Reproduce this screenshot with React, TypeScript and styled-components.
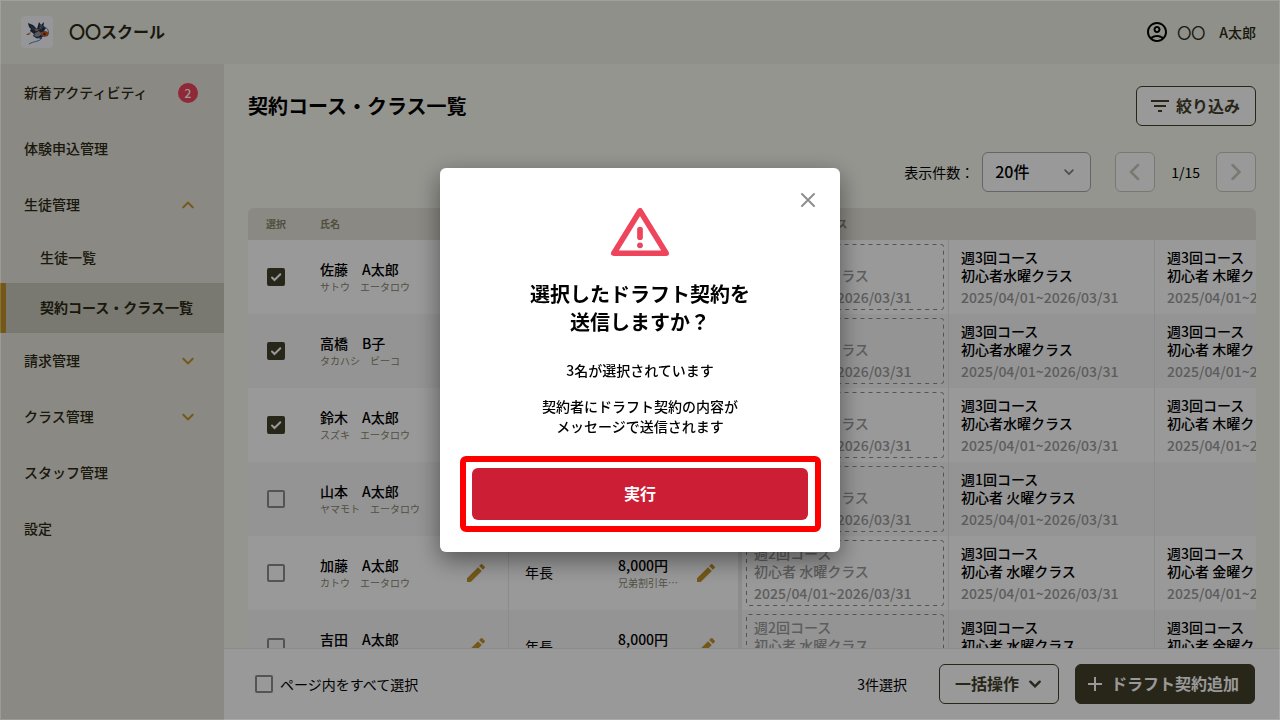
import React, { useState } from "react";
import styled, { createGlobalStyle, css } from "styled-components";
import { MdAdd, MdEdit, MdFilterList, MdOutlineAccountCircle } from "react-icons/md";

const color = {
  ink: "#000000",
  olive: "#433e2b",
  navText: "#2b2914",
  muted: "#88866f",
  gray: "#9b9b9b",
  gold: "#c0932a",
  danger: "#cc1e34",
  alert: "#ee445c",
  header: "#eff0e5",
  sidebar: "#e7e4da",
  page: "#f7f8ef",
  line: "#e9e9e9",
};

const GlobalStyle = createGlobalStyle`
  *, *::before, *::after { box-sizing: border-box; }
  body {
    margin: 0;
    font-family: "Noto Sans CJK JP", "Noto Sans", sans-serif;
    font-size: 14px;
    line-height: 20px;
    font-weight: 500;
    color: ${color.ink};
  }
  button, select, input { font: inherit; color: inherit; margin: 0; }
  button { cursor: pointer; }
  a { color: inherit; text-decoration: none; }
  h1, h2, p { margin: 0; }
  svg { display: block; flex: none; }
`;

const Shell = styled.div`
  display: grid;
  grid-template: 64px minmax(0, 1fr) / 224px minmax(0, 1fr);
  height: 100vh;
  overflow: hidden;
`;

const Header = styled.header`
  grid-column: 1 / -1;
  display: flex;
  align-items: center;
  justify-content: space-between;
  padding: 0 24px 0 21px;
  background: ${color.header};
  color: ${color.navText};
`;

const Brand = styled.div`
  display: flex;
  align-items: center;
  gap: 16px;
  font-size: 16px;
  font-weight: 700;
`;

const Label = styled.span`
  padding-bottom: 2px;
`;

const LogoTile = styled.span`
  width: 32px;
  height: 32px;
  border-radius: 4px;
  background: #fbfbff;
`;

const User = styled.div`
  display: flex;
  align-items: center;
  gap: 8px;
  white-space: pre;

  svg { color: ${color.ink}; }
`;

const Sidebar = styled.nav`
  padding-top: 1px;
  background: ${color.sidebar};
  color: ${color.navText};
`;

const NavLink = styled.a`
  display: flex;
  align-items: center;
  justify-content: space-between;
  height: 56px;
  padding: 0 24px;
`;

const SubLink = styled.a<{ $active?: boolean }>`
  display: flex;
  align-items: center;
  height: 50px;
  padding: 0 0 2px 34px;
  border-left: 6px solid transparent;
  ${(p) =>
    p.$active &&
    css`
      font-weight: 700;
      background: #cacabc;
      border-left-color: ${color.gold};
    `}
`;

const NavMark = styled.span`
  color: ${color.gold};
`;

const Badge = styled.span`
  width: 20px;
  height: 20px;
  margin-right: 2px;
  border-radius: 50%;
  background: ${color.alert};
  color: #fff;
  font-size: 12px;
  text-align: center;
`;

const Main = styled.main`
  display: flex;
  flex-direction: column;
  min-height: 0;
  background: ${color.page};
`;

const Content = styled.div`
  flex: 1;
  min-height: 0;
  overflow: hidden;
  padding: 22px 24px 0;
`;

const TitleRow = styled.div`
  display: flex;
  align-items: center;
  justify-content: space-between;
`;

const PageTitle = styled.h1`
  font-size: 20px;
  line-height: 28px;
  font-weight: 700;
`;

const Button = styled.button<{ $primary?: boolean }>`
  display: inline-flex;
  align-items: center;
  gap: 4px;
  height: 40px;
  padding: 0 15px 0 11px;
  border: 1px solid ${color.olive};
  border-radius: 6px;
  background: ${(p) => (p.$primary ? color.olive : "#fff")};
  color: ${(p) => (p.$primary ? "#fff" : color.olive)};
  font-size: 16px;
  font-weight: 700;
  white-space: nowrap;
`;

const BulkButton = styled(Button)`
  padding: 0 11px 0 15px;
`;

const AddButton = styled(Button)`
  padding: 0 15px 0 7px;
`;

const PagerRow = styled.div`
  display: flex;
  align-items: center;
  justify-content: flex-end;
  gap: 24px;
  margin: 26px 0 16px;
  font-weight: 400;
`;

const PageSize = styled.label`
  display: flex;
  align-items: center;
  gap: 8px;
`;

const SelectBox = styled.span`
  display: grid;
  align-items: center;

  > * { grid-area: 1 / 1; }
  > svg {
    justify-self: end;
    margin-right: 12px;
    color: #7d7d7d;
    pointer-events: none;
  }
`;

const Select = styled.select`
  appearance: none;
  width: 109px;
  height: 40px;
  padding: 0 12px 2px;
  border: 1px solid #a8a8ad;
  border-radius: 6px;
  background: #fff;
  font-size: 16px;
  font-weight: 500;
`;

const Pager = styled.div`
  display: flex;
  align-items: center;
  gap: 16px;
`;

const PagerButton = styled.button`
  display: grid;
  place-items: center;
  width: 40px;
  height: 40px;
  padding: 0;
  border: 1px solid #cacabc;
  border-radius: 6px;
  background: #fff;
  color: #cacabc;
`;

const TableWrap = styled.div`
  overflow: hidden;
  border-radius: 6px 6px 0 0;
`;

const Table = styled.table`
  table-layout: fixed;
  width: 1113px;
  border-collapse: separate;
  border-spacing: 0;
`;

const Th = styled.th<{ $center?: boolean }>`
  height: 32px;
  padding: 0 ${(p) => (p.$center ? "0" : "16px")};
  background: ${color.sidebar};
  color: ${color.muted};
  font-size: 10px;
  line-height: 14px;
  font-weight: 700;
  text-align: ${(p) => (p.$center ? "center" : "left")};
`;

const Row = styled.tr`
  background: #fff;
  &:nth-child(even) { background: #f7f7f7; }
`;

const Td = styled.td<{ $line?: number; $pad?: number }>`
  height: 74px;
  padding: 0 ${(p) => p.$pad ?? 16}px;
  border-right: ${(p) => p.$line ?? 0}px solid ${color.line};
  vertical-align: middle;
`;

const GradeCell = styled(Td)`
  padding-bottom: 2px;
  font-weight: 400;
`;

const EditableCell = styled.div`
  display: flex;
  align-items: center;
  justify-content: space-between;
`;

const SubText = styled.div`
  color: ${color.muted};
  font-size: 10px;
  line-height: 16px;
  font-weight: 400;
`;

const EditButton = styled.button`
  padding: 0;
  border: 0;
  background: none;
  color: ${color.gold};
  margin-right: 4px;
`;

const Course = styled.div<{ $draft?: boolean }>`
  position: relative;
  display: flex;
  flex-direction: column;
  justify-content: center;
  height: 66px;
  line-height: 18px;
  white-space: nowrap;
  padding-left: ${(p) => (p.$draft ? "8px" : "0")};
  color: ${(p) => (p.$draft ? color.gray : color.ink)};
`;

const CourseTerm = styled.span`
  margin-top: 4px;
  color: ${color.gray};
`;

const DashedFrame = styled.svg`
  position: absolute;
  inset: 0;
  width: 100%;
  height: 100%;
`;

const CheckWrap = styled.span`
  display: grid;
  place-items: center;
  width: 18px;
  height: 18px;

  > * { grid-area: 1 / 1; }
  > svg { visibility: hidden; pointer-events: none; }
  > input:checked + svg { visibility: visible; }
`;

const CheckInput = styled.input`
  appearance: none;
  width: 18px;
  height: 18px;
  border: 2px solid #8d8d8d;
  border-radius: 2px;

  &:checked {
    border-color: ${color.olive};
    background: ${color.olive};
  }
`;

const CheckCell = styled.div`
  display: grid;
  place-items: center;
`;

const ActionBar = styled.footer`
  display: flex;
  align-items: center;
  justify-content: space-between;
  height: 72px;
  padding: 0 25px 1px 31px;
  border-top: 1px solid ${color.line};
  background: #fff;
`;

const SelectAll = styled.label`
  display: flex;
  align-items: center;
  gap: 7px;
  font-weight: 400;
`;

const Actions = styled.div`
  display: flex;
  align-items: center;
  gap: 16px;
`;

const SelectedCount = styled.span`
  margin-right: 16px;
  font-weight: 400;
`;

const Backdrop = styled.div`
  position: fixed;
  inset: 0;
  display: grid;
  place-items: center;
  border: 1px solid rgba(255, 255, 255, 0.15);
  background: rgba(0, 0, 0, 0.4);
`;

const Dialog = styled.section`
  position: relative;
  display: flex;
  flex-direction: column;
  align-items: center;
  width: 400px;
  padding: 40px 32px 32px;
  border-radius: 6px;
  background: #fff;
  text-align: center;
  box-shadow: 0 8px 24px rgba(0, 0, 0, 0.45);
`;

const CloseButton = styled.button`
  position: absolute;
  top: 20px;
  right: 20px;
  padding: 0;
  border: 0;
  background: none;
  color: #8e8e8e;
`;

const DialogTitle = styled.h2`
  margin: 24px 0;
  font-size: 20px;
  line-height: 28px;
  font-weight: 700;
`;

const DialogNote = styled.p`
  margin: 16px 0 32px;
`;

const Highlight = styled.div`
  position: relative;
  width: 100%;

  &::after {
    content: "";
    position: absolute;
    inset: -12px -13px -12px -12px;
    border: 6px solid #ff0000;
    border-radius: 6px;
    pointer-events: none;
  }
`;

const RunButton = styled.button`
  display: block;
  width: 100%;
  height: 52px;
  padding: 0 0 2px;
  border: 0;
  border-radius: 6px;
  background: ${color.danger};
  color: #fff;
  font-size: 16px;
  font-weight: 700;
`;

type Direction = "up" | "down" | "left" | "right";

const chevrons: Record<Direction, string> = {
  up: "M7.300 14.300 12 9.600 16.700 14.300",
  down: "M7.300 9.700 12 14.400 16.700 9.700",
  left: "M15 5 8 12 15 19",
  right: "M8.500 5 15.500 12 8.500 19",
};

function Chevron({ dir, size = 24, stroke = 2 }: { dir: Direction; size?: number; stroke?: number }) {
  return (
    <svg width={size} height={size} viewBox="0 0 24 24" fill="none" stroke="currentColor"
      strokeWidth={stroke} strokeLinecap="round" strokeLinejoin="miter" aria-hidden="true">
      <path d={chevrons[dir]} />
    </svg>
  );
}

function Logo() {
  return (
    <LogoTile>
      <svg width="32" height="32" viewBox="0 0 32 32" aria-hidden="true">
        <path d="M7 7 12 9 16 13 18 6 20 9 23 6 22.500 10 25 12 23 15 26 18 21 21 16 22.500 12 20 13 18 9 15 10 13 8 11Z" fill="#253349" />
        <path d="M9 9 14 12 17 16 12 14Z" fill="#3c506b" />
        <path d="M19 8 22 10 21 13 18 14Z" fill="#51677f" />
        <path d="M14 17 18 15 21 18 17 21 13 20Z" fill="#8f969e" />
        <path d="M20 16 25 15 28 17 27 20 23 21 20 19Z" fill="#c75b27" />
        <path d="M22 17.500 24 16.500 25 18.500 23 19.500Z" fill="#5d2b22" />
        <path d="M14 13 18 13 17 15 14 15ZM6 18 10 16 8 19 5 19Z" fill="#b66f55" />
        <path d="M23 11C27 12 28 15 27 18M21 22C18 26 13 25 8 28" fill="none" stroke="#3d83bd" strokeWidth="1" />
        <path d="M17 22 22 20 20 23Z" fill="#285d90" />
      </svg>
    </LogoTile>
  );
}

function WarningIcon() {
  return (
    <svg width="60" height="48" viewBox="0 0 60 48" aria-hidden="true">
      <path d="M30 2.800 3.800 45.200H56.200Z" fill="none" stroke={color.alert} strokeWidth="5.600" strokeLinejoin="round" />
      <path d="M30 21.500V29.200" stroke={color.alert} strokeWidth="5.700" strokeLinecap="round" />
      <circle cx="30" cy="37.300" r="2.900" fill={color.alert} />
    </svg>
  );
}

interface CheckProps {
  id?: string;
  label?: string;
  checked: boolean;
  onChange: (next: boolean) => void;
}

function Checkbox({ id, label, checked, onChange }: CheckProps) {
  return (
    <CheckWrap>
      <CheckInput id={id} type="checkbox" aria-label={label} checked={checked}
        onChange={(e) => onChange(e.target.checked)} />
      <svg width="18" height="18" viewBox="0 0 18 18" fill="none" stroke="#fff" strokeWidth="2"
        strokeLinecap="round" aria-hidden="true">
        <path d="M5 9.500 7.500 12 13.300 6.200" />
      </svg>
    </CheckWrap>
  );
}

const TERM = "2025/04/01~2026/03/31";

interface CourseInfo {
  plan: string;
  group: string;
}

function CourseBlock({ course, draft }: { course: CourseInfo; draft?: boolean }) {
  return (
    <Course $draft={draft}>
      {draft && (
        <DashedFrame aria-hidden="true">
          <rect x="0.5" y="0.5" rx="2" fill="none" stroke="#8d8d8d" strokeDasharray="4 4"
            style={{ width: "calc(100% - 1px)", height: "calc(100% - 1px)" }} />
        </DashedFrame>
      )}
      <span>{course.plan}</span>
      <span>{course.group}</span>
      <CourseTerm>{TERM}</CourseTerm>
    </Course>
  );
}

interface Student {
  name: string;
  kana: string;
  selected: boolean;
  courses: CourseInfo[];
}

const week = (times: number, group: string): CourseInfo => ({ plan: `週${times}回コース`, group });
const draftCourse = week(2, "初心者 水曜クラス");

const initialStudents: Student[] = [
  { name: "佐藤　A太郎", kana: "サトウ　エータロウ", selected: true, courses: [week(3, "初心者水曜クラス"), week(3, "初心者 木曜クラス")] },
  { name: "高橋　B子", kana: "タカハシ　ビーコ", selected: true, courses: [week(3, "初心者水曜クラス"), week(3, "初心者 木曜クラス")] },
  { name: "鈴木　A太郎", kana: "スズキ　エータロウ", selected: true, courses: [week(3, "初心者水曜クラス"), week(3, "初心者 木曜クラス")] },
  { name: "山本　A太郎", kana: "ヤマモト　エータロウ", selected: false, courses: [week(1, "初心者 火曜クラス")] },
  { name: "加藤　A太郎", kana: "カトウ　エータロウ", selected: false, courses: [week(3, "初心者 水曜クラス"), week(3, "初心者 金曜クラス")] },
  { name: "吉田　A太郎", kana: "ヨシダ　エータロウ", selected: false, courses: [week(3, "初心者 水曜クラス"), week(3, "初心者 金曜クラス")] },
];

const columnWidths = [56, 205, 93, 140, 207, 206, 206];

export default function App() {
  const [students, setStudents] = useState(initialStudents);
  const [open, setOpen] = useState(true);
  const count = students.filter((s) => s.selected).length;

  const toggle = (index: number, selected: boolean) =>
    setStudents((list) => list.map((s, i) => (i === index ? { ...s, selected } : s)));

  return (
    <>
      <GlobalStyle />
      <Shell>
        <Header>
          <Brand>
            <Logo />
            <Label>〇〇スクール</Label>
          </Brand>
          <User>
            <MdOutlineAccountCircle size={24} aria-hidden="true" />
            〇〇　A太郎
          </User>
        </Header>

        <Sidebar>
          <NavLink href="#activity"><Label>新着アクティビティ</Label><Badge>2</Badge></NavLink>
          <NavLink href="#trial"><Label>体験申込管理</Label></NavLink>
          <NavLink href="#students"><Label>生徒管理</Label><NavMark><Chevron dir="up" /></NavMark></NavLink>
          <SubLink href="#student-list">生徒一覧</SubLink>
          <SubLink href="#contracts" $active aria-current="page">契約コース・クラス一覧</SubLink>
          <NavLink href="#billing"><Label>請求管理</Label><NavMark><Chevron dir="down" /></NavMark></NavLink>
          <NavLink href="#classes"><Label>クラス管理</Label><NavMark><Chevron dir="down" /></NavMark></NavLink>
          <NavLink href="#staff"><Label>スタッフ管理</Label></NavLink>
          <NavLink href="#settings"><Label>設定</Label></NavLink>
        </Sidebar>

        <Main>
          <Content>
            <TitleRow>
              <PageTitle>契約コース・クラス一覧</PageTitle>
              <Button type="button"><MdFilterList size={24} aria-hidden="true" /><Label>絞り込み</Label></Button>
            </TitleRow>
            <PagerRow>
              <PageSize htmlFor="page-size">
                表示件数：
                <SelectBox>
                  <Select id="page-size" defaultValue="20">
                    <option value="20">20件</option>
                    <option value="50">50件</option>
                  </Select>
                  <Chevron dir="down" size={20} stroke={2} />
                </SelectBox>
              </PageSize>
              <Pager>
                <PagerButton type="button" aria-label="前のページ"><Chevron dir="left" stroke={2.5} /></PagerButton>
                <span>1/15</span>
                <PagerButton type="button" aria-label="次のページ"><Chevron dir="right" stroke={2.5} /></PagerButton>
              </Pager>
            </PagerRow>
            <TableWrap>
              <Table>
                <colgroup>
                  {columnWidths.map((width, i) => <col key={i} width={width} />)}
                </colgroup>
                <thead>
                  <tr>
                    <Th $center>選択</Th>
                    <Th>氏名</Th>
                    <Th>学年</Th>
                    <Th>割引</Th>
                    <Th colSpan={3}>契約コース・クラス</Th>
                  </tr>
                </thead>
                <tbody>
                  {students.map((s, i) => (
                    <Row key={s.kana}>
                      <Td $pad={0}>
                        <CheckCell>
                          <Checkbox label={s.name} checked={s.selected} onChange={(v) => toggle(i, v)} />
                        </CheckCell>
                      </Td>
                      <Td $line={1}>
                        <EditableCell>
                          <div>
                            {s.name}
                            <SubText>{s.kana}</SubText>
                          </div>
                          <EditButton type="button" aria-label="氏名を編集"><MdEdit size={24} /></EditButton>
                        </EditableCell>
                      </Td>
                      <GradeCell>年長</GradeCell>
                      <Td $line={4}>
                        <EditableCell>
                          <div>
                            8,000円
                            <SubText>兄弟割引年…</SubText>
                          </div>
                          <EditButton type="button" aria-label="割引を編集"><MdEdit size={24} /></EditButton>
                        </EditableCell>
                      </Td>
                      <Td $line={1} $pad={4}><CourseBlock course={draftCourse} draft /></Td>
                      <Td $line={1} $pad={12}><CourseBlock course={s.courses[0]} /></Td>
                      <Td $pad={12}>{s.courses[1] && <CourseBlock course={s.courses[1]} />}</Td>
                    </Row>
                  ))}
                </tbody>
              </Table>
            </TableWrap>
          </Content>

          <ActionBar>
            <SelectAll htmlFor="select-all">
              <Checkbox id="select-all" checked={count === students.length}
                onChange={(selected) => setStudents((list) => list.map((s) => ({ ...s, selected })))} />
              ページ内をすべて選択
            </SelectAll>
            <Actions>
              <SelectedCount>{count}件選択</SelectedCount>
              <BulkButton type="button"><Label>一括操作</Label><Chevron dir="down" stroke={2.4} /></BulkButton>
              <AddButton type="button" $primary><MdAdd size={24} aria-hidden="true" /><Label>ドラフト契約追加</Label></AddButton>
            </Actions>
          </ActionBar>
        </Main>
      </Shell>

      {open && (
        <Backdrop>
          <Dialog role="dialog" aria-modal="true" aria-labelledby="dialog-title">
            <CloseButton type="button" aria-label="閉じる" onClick={() => setOpen(false)}>
              <svg width="24" height="24" viewBox="0 0 24 24" stroke="currentColor" strokeWidth="2" strokeLinecap="round" aria-hidden="true">
                <path d="M6 6 18 18M18 6 6 18" />
              </svg>
            </CloseButton>
            <WarningIcon />
            <DialogTitle id="dialog-title">選択したドラフト契約を<br />送信しますか？</DialogTitle>
            <p>{count}名が選択されています</p>
            <DialogNote>契約者にドラフト契約の内容が<br />メッセージで送信されます</DialogNote>
            <Highlight>
              <RunButton type="button">実行</RunButton>
            </Highlight>
          </Dialog>
        </Backdrop>
      )}
    </>
  );
}
